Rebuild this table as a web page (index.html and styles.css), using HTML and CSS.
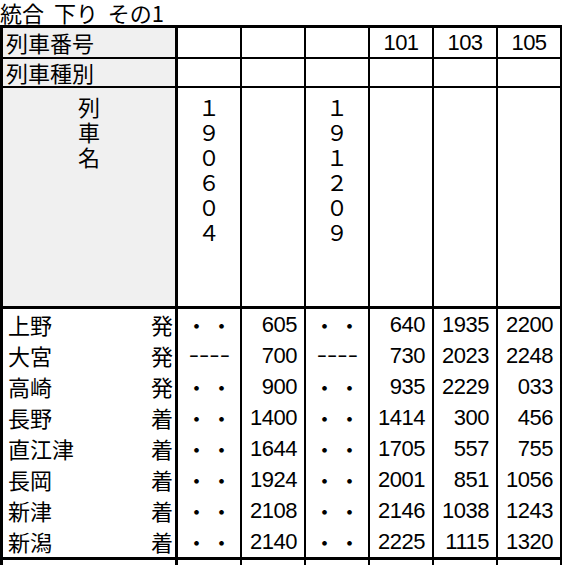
FILE: index.html
```html
<!DOCTYPE html>
<html lang="ja">
<head>
<meta charset="utf-8">
<title>統合 下り その1</title>
<link rel="stylesheet" href="styles.css">
</head>
<body>
<h1 class="title">統合 下り その1</h1>
<table class="timetable">
  <tr class="row-no">
    <th class="label">列車番号</th>
    <td></td><td></td><td></td>
    <td class="center">101</td><td class="center">103</td><td class="center">105</td>
  </tr>
  <tr class="row-kind">
    <th class="label">列車種別</th>
    <td></td><td></td><td></td><td></td><td></td><td></td>
  </tr>
  <tr class="row-name">
    <th class="label"><span class="vtext">列車名</span></th>
    <td><span class="vtext">１９０６０４</span></td>
    <td></td>
    <td><span class="vtext">１９１２０９</span></td>
    <td></td><td></td><td></td>
  </tr>
  <tr class="st">
    <th class="station"><div class="st-in"><span>上野</span><span>発</span></div></th>
    <td class="pass">・・</td><td class="t">605</td><td class="pass">・・</td><td class="t">640</td><td class="t">1935</td><td class="t">2200</td>
  </tr>
  <tr class="st">
    <th class="station"><div class="st-in"><span>大宮</span><span>発</span></div></th>
    <td class="dash"><span class="dash-in">----</span></td><td class="t">700</td><td class="dash"><span class="dash-in">----</span></td><td class="t">730</td><td class="t">2023</td><td class="t">2248</td>
  </tr>
  <tr class="st">
    <th class="station"><div class="st-in"><span>高崎</span><span>発</span></div></th>
    <td class="pass">・・</td><td class="t">900</td><td class="pass">・・</td><td class="t">935</td><td class="t">2229</td><td class="t">033</td>
  </tr>
  <tr class="st">
    <th class="station"><div class="st-in"><span>長野</span><span>着</span></div></th>
    <td class="pass">・・</td><td class="t">1400</td><td class="pass">・・</td><td class="t">1414</td><td class="t">300</td><td class="t">456</td>
  </tr>
  <tr class="st">
    <th class="station"><div class="st-in"><span>直江津</span><span>着</span></div></th>
    <td class="pass">・・</td><td class="t">1644</td><td class="pass">・・</td><td class="t">1705</td><td class="t">557</td><td class="t">755</td>
  </tr>
  <tr class="st">
    <th class="station"><div class="st-in"><span>長岡</span><span>着</span></div></th>
    <td class="pass">・・</td><td class="t">1924</td><td class="pass">・・</td><td class="t">2001</td><td class="t">851</td><td class="t">1056</td>
  </tr>
  <tr class="st">
    <th class="station"><div class="st-in"><span>新津</span><span>着</span></div></th>
    <td class="pass">・・</td><td class="t">2108</td><td class="pass">・・</td><td class="t">2146</td><td class="t">1038</td><td class="t">1243</td>
  </tr>
  <tr class="st st-last">
    <th class="station"><div class="st-in"><span>新潟</span><span>着</span></div></th>
    <td class="pass">・・</td><td class="t">2140</td><td class="pass">・・</td><td class="t">2225</td><td class="t">1115</td><td class="t">1320</td>
  </tr>
  <tr class="row-more">
    <th class="station"></th>
    <td></td><td></td><td></td><td></td><td></td><td></td>
  </tr>
</table>
</body>
</html>
```

FILE: styles.css
```css
html, body {
  margin: 0;
  padding: 0;
  overflow: hidden;
  background: #fff;
}

body {
  width: 565px;
  height: 565px;
  font-family: "Noto Sans CJK JP", sans-serif;
  color: #000;
}

.title {
  margin: 0;
  font-size: 22px;
  line-height: 25px;
  font-weight: 400;
  white-space: pre;
  word-spacing: 5px;
}

.timetable {
  border-collapse: separate;
  border-spacing: 0;
  table-layout: fixed;
  border-top: 3px solid #000;
  border-left: 3px solid #000;
}

.timetable th,
.timetable td {
  box-sizing: border-box;
  padding: 0;
  width: 64px;
  border-right: 2px solid #000;
  font-weight: 400;
  font-size: 22px;
  vertical-align: middle;
}

.timetable th.label,
.timetable th.station {
  width: 175px;
  border-right: 3px solid #000;
  text-align: left;
}

.timetable th.label {
  background: #f0f0f0;
  padding-left: 3px;
  line-height: 25px;
}

.row-no th,
.row-no td {
  height: 31px;
  border-bottom: 2px solid #000;
}

.row-kind th,
.row-kind td {
  height: 29px;
  border-bottom: 2px solid #000;
}

.row-name th,
.row-name td {
  height: 221px;
  border-bottom: 3px solid #000;
  vertical-align: top;
  text-align: center;
  padding-top: 9px;
}

.timetable .row-name th.label {
  text-align: center;
  padding-left: 0;
}

.vtext {
  display: inline-block;
  writing-mode: vertical-rl;
  text-orientation: upright;
  letter-spacing: 3px;
  line-height: 22px;
  font-size: 22px;
}

.timetable td.center {
  text-align: center;
  font-family: "Liberation Sans", Arial, sans-serif;
  font-size: 22px;
  letter-spacing: -0.5px;
}

.st th,
.st td {
  height: 31px;
  line-height: 31px;
}

.st-last th,
.st-last td {
  height: 34px;
  border-bottom: 3px solid #000;
}

.st-in {
  display: flex;
  justify-content: space-between;
  padding: 0 2px 0 5px;
  line-height: 31px;
}

.timetable td.t {
  text-align: right;
  padding-right: 7px;
  font-family: "Liberation Sans", Arial, sans-serif;
  font-size: 22px;
  letter-spacing: -0.5px;
}

.timetable td.pass {
  text-align: center;
  letter-spacing: 3px;
  padding-left: 3px;
}

.timetable td.dash {
  text-align: center;
  font-family: "Liberation Sans", Arial, sans-serif;
  font-size: 20px;
}

.dash-in {
  display: inline-block;
  transform: scaleX(1.55);
  letter-spacing: 0;
}

.row-more th,
.row-more td {
  height: 30px;
}
```
